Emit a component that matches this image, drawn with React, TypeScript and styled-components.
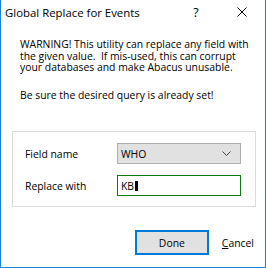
import * as React from 'react';
import styled, { createGlobalStyle } from 'styled-components';

const GlobalStyle = createGlobalStyle`
  html, body {
    margin: 0;
    padding: 0;
    background: #ffffff;
  }
  body {
    font-family: 'Open Sans', 'Noto Sans', 'Liberation Sans', sans-serif;
    color: #000000;
  }
`;

const message = [
  'WARNING! This utility can replace any field with',
  'the given value.  If mis-used, this can corrupt',
  'your databases and make Abacus unusable.',
];

const App = () => {
  return (
    <>
      <GlobalStyle />
      <Window>
        <TitleBar>
          <Title>Global Replace for Events</Title>
          <HelpButton>?</HelpButton>
          <CloseButton>
            <svg width="10" height="10" viewBox="0 0 10 10">
              <path d="M0.5 0.5 L9.5 9.5 M9.5 0.5 L0.5 9.5" stroke="#000" strokeWidth="1" fill="none" />
            </svg>
          </CloseButton>
        </TitleBar>
        <Body>
          <Message>
            {message.map((line) => (
              <Line key={line}>{line}</Line>
            ))}
          </Message>
          <Notice>Be sure the desired query is already set!</Notice>
          <GroupBox>
            <FieldRow>
              <Label>Field name</Label>
              <Combo>
                <span>WHO</span>
                <svg width="9" height="5" viewBox="0 0 9 5">
                  <path d="M0.5 0.5 L4.5 4.5 L8.5 0.5" stroke="#444" strokeWidth="1" fill="none" />
                </svg>
              </Combo>
            </FieldRow>
            <FieldRow>
              <Label>Replace with</Label>
              <TextBox>
                KB<Caret />
              </TextBox>
            </FieldRow>
          </GroupBox>
          <Buttons>
            <DoneButton>Done</DoneButton>
            <LinkButton>
              <u>C</u>ancel
            </LinkButton>
          </Buttons>
        </Body>
      </Window>
    </>
  );
};

export default App;

const Window = styled.div`
  box-sizing: border-box;
  width: 266px;
  height: 268px;
  border: 1px solid #1883d7;
  border-top: none;
  background: #ffffff;
  display: flex;
  flex-direction: column;
`;

const TitleBar = styled.div`
  height: 24px;
  display: flex;
  align-items: center;
  padding-left: 4px;
  font-size: 11.4px;
`;

const Title = styled.div`
  flex: 1;
  white-space: nowrap;
`;

const HelpButton = styled.div`
  width: 46px;
  text-align: center;
  font-size: 12.5px;
`;

const CloseButton = styled.div`
  width: 46px;
  display: flex;
  justify-content: center;
  align-items: center;
`;

const Body = styled.div`
  padding: 15px 10px 0 11px;
  font-size: 10.4px;
`;

const Message = styled.div`
  padding-left: 8px;
  line-height: 11.7px;
`;

const Line = styled.div`
  white-space: pre;
`;

const Notice = styled.div`
  padding-left: 8px;
  margin-top: 15px;
  line-height: 12px;
  white-space: nowrap;
`;

const GroupBox = styled.div`
  margin-top: 30px;
  width: 244px;
  box-sizing: border-box;
  border: 1px solid #dcdcdc;
  padding: 11px 14px 10px 12px;
  display: flex;
  flex-direction: column;
  gap: 11px;
`;

const FieldRow = styled.div`
  display: flex;
  align-items: center;
  justify-content: space-between;
`;

const Label = styled.div`
  white-space: nowrap;
`;

const Combo = styled.div`
  box-sizing: border-box;
  width: 124px;
  height: 21px;
  background: #e1e1e1;
  border: 1px solid #adadad;
  display: flex;
  align-items: center;
  justify-content: space-between;
  padding: 0 9px 0 3px;
`;

const TextBox = styled.div`
  box-sizing: border-box;
  width: 124px;
  height: 21px;
  border: 1px solid #107c10;
  display: flex;
  align-items: center;
  padding-left: 3px;
`;

const Caret = styled.span`
  display: inline-block;
  width: 3px;
  height: 10px;
  background: #000000;
  margin-left: 1px;
`;

const Buttons = styled.div`
  display: flex;
  justify-content: flex-end;
  align-items: center;
  margin-top: 23px;
  gap: 13px;
`;

const DoneButton = styled.div`
  box-sizing: border-box;
  width: 74px;
  height: 25px;
  background: #e1e1e1;
  border: 2px solid #0078d7;
  display: flex;
  align-items: center;
  justify-content: center;
`;

const LinkButton = styled.div`
  white-space: nowrap;
  padding-right: 1px;
`;
